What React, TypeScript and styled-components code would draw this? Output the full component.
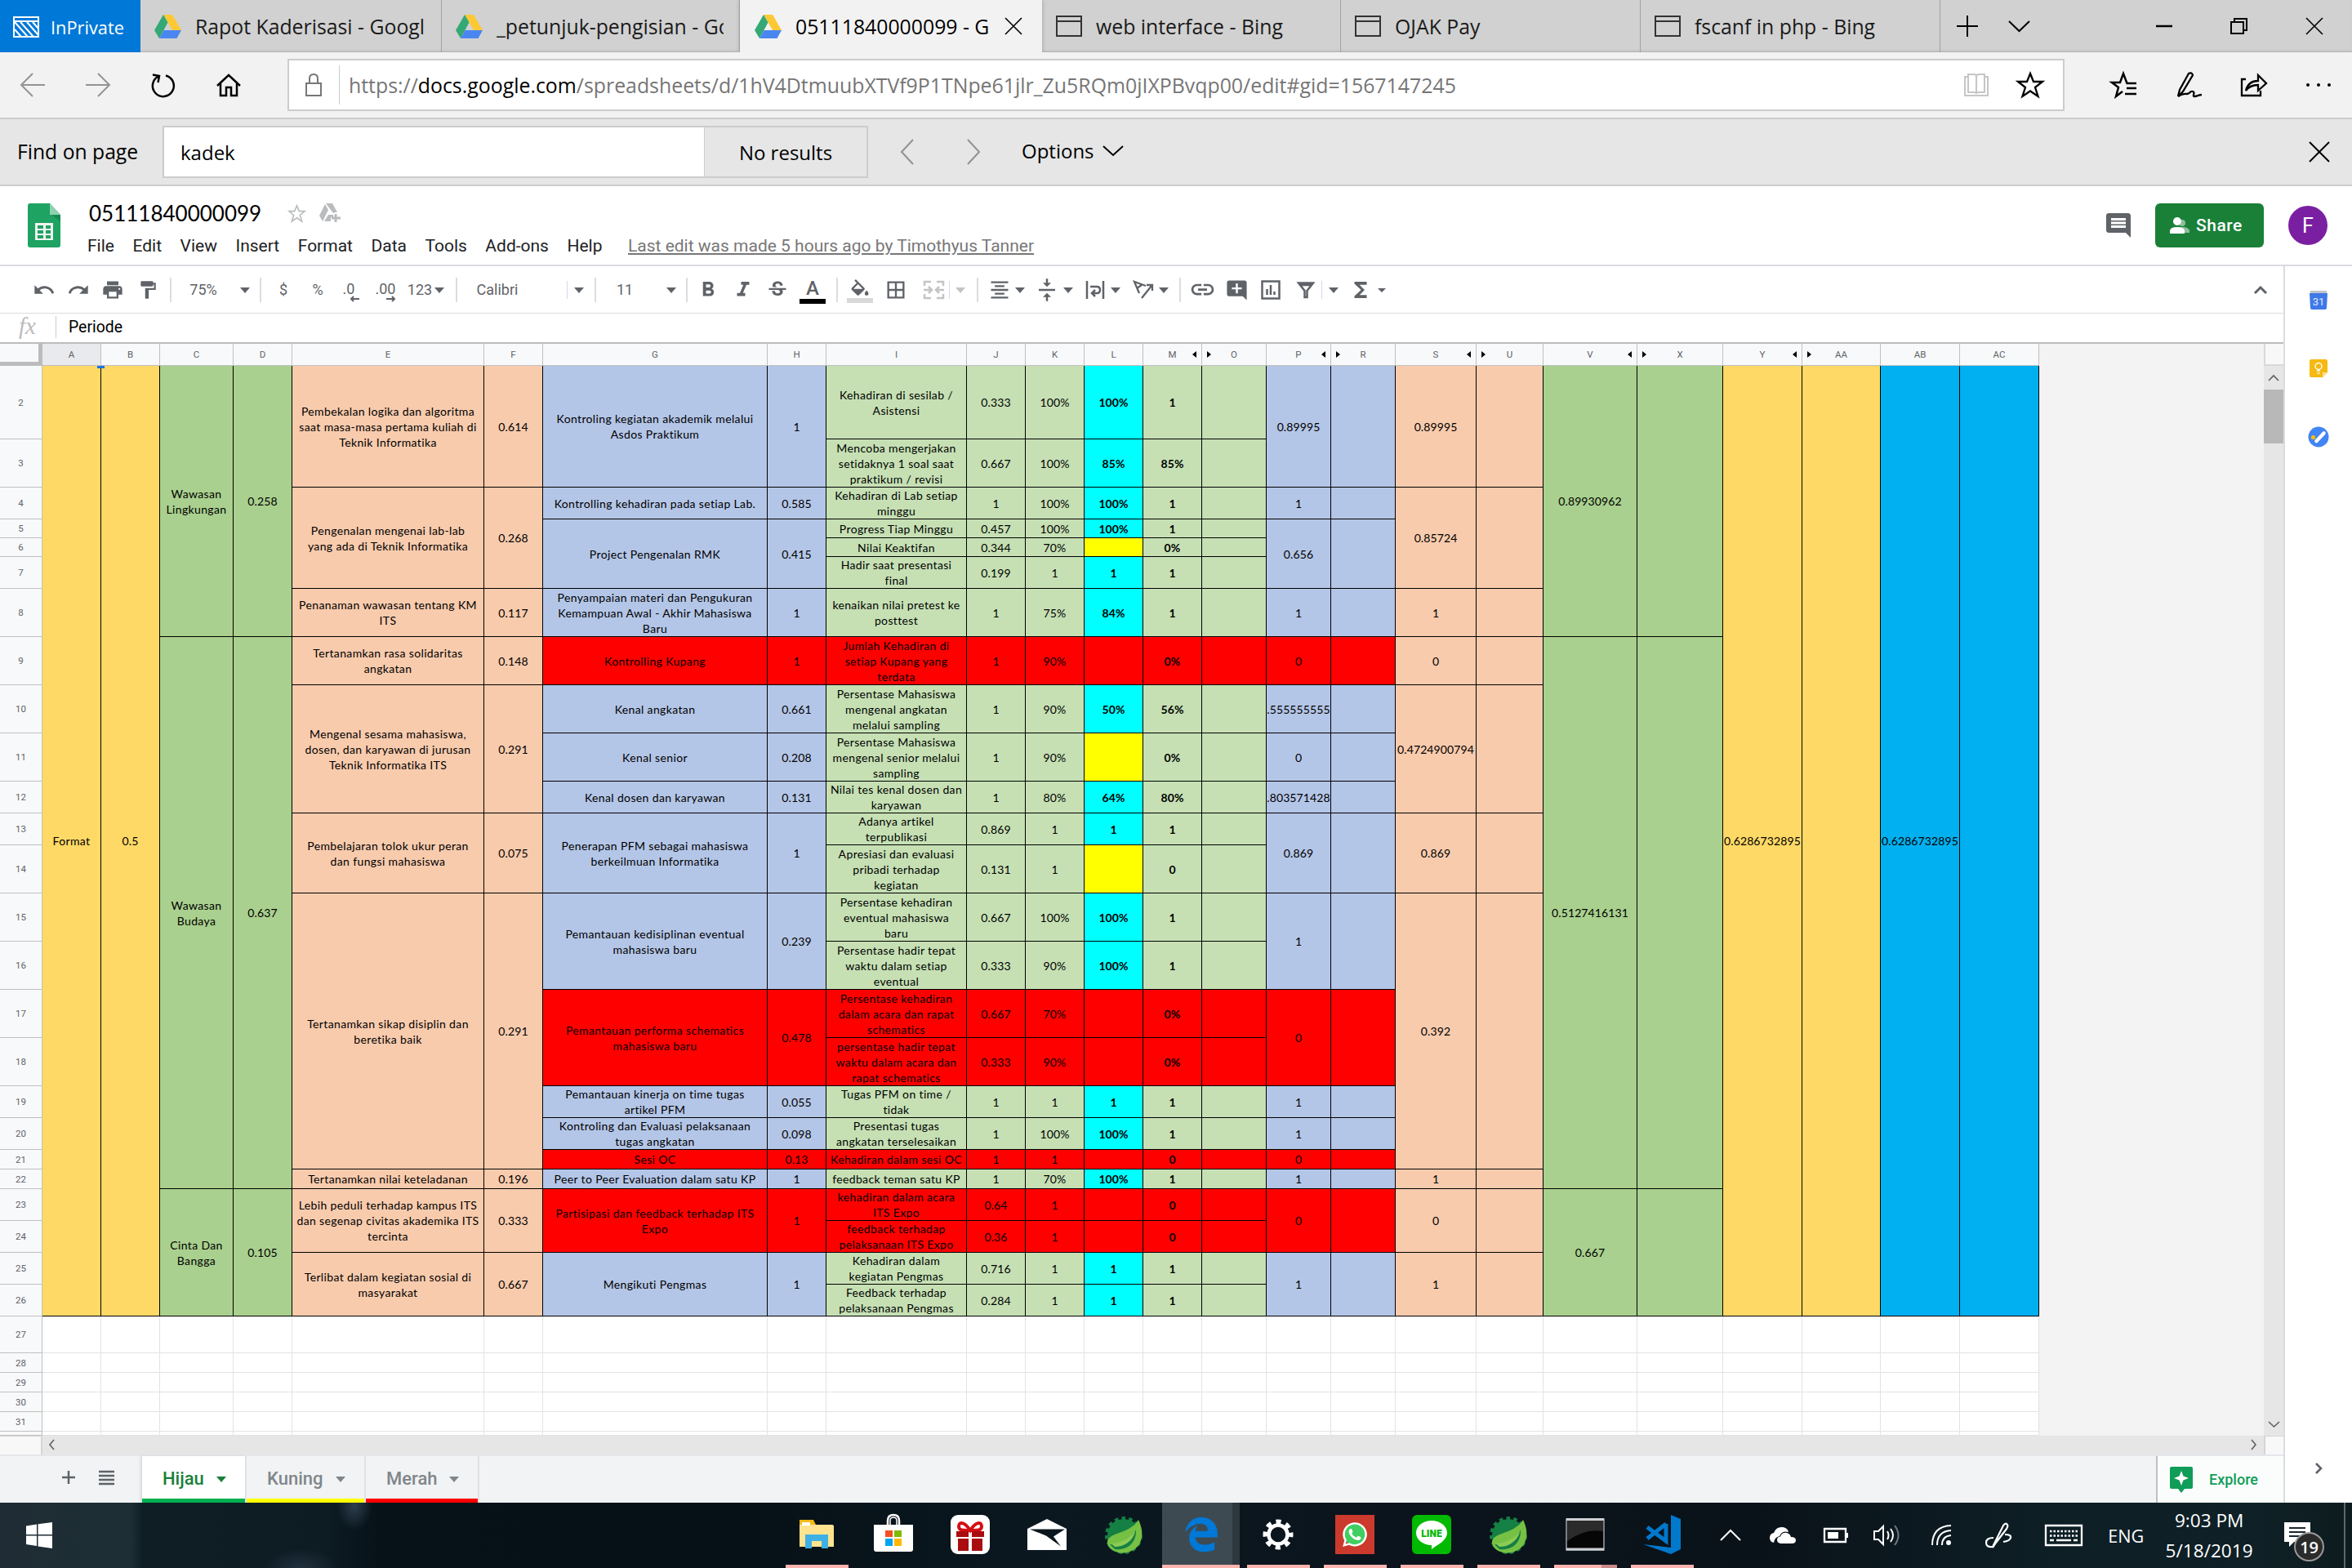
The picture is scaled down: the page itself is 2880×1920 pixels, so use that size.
import React from "react";
import styled, { createGlobalStyle, css } from "styled-components";
import {
  MdUndo, MdRedo, MdPrint, MdFormatPaint, MdFormatBold, MdFormatItalic, MdStrikethroughS,
  MdFormatColorFill, MdBorderAll, MdFormatAlignCenter, MdVerticalAlignCenter, MdInsertLink,
  MdAddComment, MdFunctions, MdComment,
} from "react-icons/md";
import { FaWhatsapp, FaEdgeLegacy } from "react-icons/fa6";

const UI = `"Open Sans", "Noto Sans", sans-serif`;
const DOCS = `Roboto, "Liberation Sans", sans-serif`;
const CELL = `Lato, "Open Sans", sans-serif`;

const Global = createGlobalStyle`
  * { box-sizing: border-box; }
  body { margin: 0; background: #fff; }
`;

const Screen = styled.div`
  width: 2880px;
  height: 1920px;
  display: flex;
  flex-direction: column;
  overflow: hidden;
  font-family: ${UI};
  color: #000;
  background: #fff;
`;

const Svg = styled.svg`
  display: block;
  flex: none;
  overflow: visible;
  fill: none;
  stroke: currentColor;
`;

/* ---------- browser tab strip ---------- */
const TabStrip = styled.div`
  height: 64px;
  flex: none;
  display: flex;
  background: #d1d1d1;
  box-shadow: inset 0 -3px 3px -2px #aaa;
`;
const PrivateBadge = styled.div`
  width: 172px;
  background: #0078d7;
  color: #fff;
  font-size: 21.8px;
  display: flex;
  align-items: center;
  gap: 14px;
  padding-left: 16px;
  padding-top: 2px;
`;
const Tab = styled.div<{ $active?: boolean; $w: number }>`
  width: ${(p) => p.$w}px;
  display: flex;
  align-items: center;
  padding: 0 ${(p) => (p.$active ? 25 : 19)}px 0 ${(p) => (p.$active ? 18 : 17)}px;
  gap: 17px;
  font-size: 24.8px;
  color: #1a1a1a;
  border-right: ${(p) => (p.$active ? "none" : "1px solid #a2a2a2")};
  ${(p) => p.$active && css`background: #f2f2f2; box-shadow: 0 0 5px #999; color: #000;`}
`;
const TabTitle = styled.span`
  flex: 1;
  overflow: hidden;
  white-space: nowrap;
  padding-bottom: 1px;
`;
const StripTools = styled.div`
  flex: 1;
  display: flex;
  align-items: center;
  padding-left: 20px;
  gap: 38px;
`;
const WindowButtons = styled.div`
  margin-left: auto;
  padding-right: 36px;
  display: flex;
  align-items: center;
  gap: 71px;
`;

/* ---------- address row ---------- */
const AddressRow = styled.div`
  height: 82px;
  flex: none;
  display: flex;
  align-items: center;
  background: #f2f2f2;
  border-bottom: 2px solid #ccc;
`;
const NavButtons = styled.div`
  width: 352px;
  padding-left: 25px;
  display: flex;
  gap: 50px;
  align-items: center;
`;
const AddressBox = styled.div`
  width: 2176px;
  height: 64px;
  border: 2px solid #ccc;
  background: #fff;
  display: flex;
  align-items: center;
  padding: 0 24px 0 20px;
`;
const AddressDivider = styled.div`
  width: 1px;
  height: 48px;
  background: #ccc;
  margin: 0 11px 0 21px;
`;
const Url = styled.div`
  flex: 1;
  font-size: 24.87px;
  color: #767676;
  white-space: nowrap;
  b { font-weight: 400; color: #000; }
`;
const AddressIcons = styled.div`
  display: flex;
  gap: 35px;
  align-items: center;
`;
const HubButtons = styled.div`
  flex: 1;
  display: flex;
  align-items: center;
  padding-left: 57px;
  gap: 47.5px;
`;
const Dots = styled(Svg)`
  fill: #000;
  stroke: none;
`;

/* ---------- find bar ---------- */
const FindBar = styled.div`
  height: 82px;
  flex: none;
  display: flex;
  align-items: center;
  background: #e6e6e6;
  border-bottom: 2px solid #ccc;
  font-size: 24px;
`;
const FindLabel = styled.div`
  width: 199px;
  padding: 0 0 2px 21px;
  font-size: 24.7px;
`;
const FindField = styled.div`
  width: 664px;
  height: 64px;
  border: 2px solid #ccc;
  border-right-width: 1px;
  background: #fff;
  display: flex;
  align-items: center;
  padding-left: 20px;
`;
const FindCount = styled.div`
  width: 200px;
  height: 64px;
  border: 2px solid #ccc;
  border-left: none;
  display: flex;
  align-items: center;
  justify-content: center;
`;
const FindSteps = styled.div`
  display: flex;
  gap: 65px;
  padding: 0 51px 0 40px;
  color: #919191;
`;
const FindOptions = styled.div`
  display: flex;
  align-items: center;
  gap: 11px;
  padding-bottom: 4px;
`;
const FindClose = styled.div`
  margin-left: auto;
  padding-right: 28px;
`;

/* ---------- document header ---------- */
const DocHeader = styled.div`
  height: 98px;
  flex: none;
  display: flex;
  border-bottom: 2px solid #dadce0;
  font-family: ${DOCS};
  padding-left: 34px;
`;
const DocLogo = styled.div`
  width: 73px;
  padding-top: 21px;
`;
const DocMeta = styled.div`
  flex: 1;
  display: flex;
  flex-direction: column;
`;
const TitleLine = styled.div`
  height: 54px;
  padding: 12px 0 0 2px;
  display: flex;
  align-items: center;
  gap: 16px;
  color: #b9bbbd;
`;
const DocTitle = styled.span`
  width: 227px;
  font-family: ${CELL};
  font-size: 26px;
  color: #000;
`;
const MenuLine = styled.div`
  height: 38px;
  display: flex;
  align-items: center;
  gap: 22.5px;
  font-size: 21px;
  color: #202124;
`;
const LastEdit = styled.span`
  margin-left: 9px;
  color: #777;
  text-decoration: underline;
`;
const DocActions = styled.div`
  display: flex;
  align-items: center;
  padding: 0 30px 0 0;
  color: #5f6368;
`;
const ShareButton = styled.div`
  width: 133px;
  height: 54px;
  margin: 0 30px 0 27px;
  border-radius: 6px;
  background: #1a8038;
  color: #fff;
  font-size: 21px;
  font-weight: 500;
  letter-spacing: 0.5px;
  display: flex;
  align-items: center;
  gap: 8px;
  padding-left: 18px;
`;
const Avatar = styled.div`
  width: 48px;
  height: 48px;
  border-radius: 50%;
  background: #7b1fa2;
  color: #fff;
  font-size: 25px;
  display: flex;
  align-items: center;
  justify-content: center;
`;

/* ---------- workspace ---------- */
const Workspace = styled.div`
  height: 1514px;
  flex: none;
  display: flex;
`;
const Editor = styled.div`
  width: 2796px;
  display: flex;
  flex-direction: column;
  font-family: ${DOCS};
`;
const SidePanel = styled.div`
  width: 84px;
  border-left: 2px solid #dadce0;
  display: flex;
  flex-direction: column;
  align-items: center;
  padding: 30px 0 35px 0;
`;
const SideIcon = styled.div<{ $gap: number; $last?: boolean }>`
  margin-top: ${(p) => (p.$last ? "auto" : p.$gap + "px")};
  color: #5f6368;
`;

const Toolbar = styled.div`
  height: 58px;
  flex: none;
  display: flex;
  align-items: center;
  border-bottom: 1px solid #dadce0;
  color: #5f6368;
  font-size: 18px;
`;
const Tool = styled.div<{ $gap: number; $w: number; $dim?: boolean; $drop?: number }>`
  width: ${(p) => p.$w}px;
  margin-left: ${(p) => p.$gap}px;
  margin-top: ${(p) => p.$drop || 0}px;
  display: flex;
  flex: none;
  justify-content: center;
  align-items: center;
  white-space: nowrap;
  color: ${(p) => (p.$dim ? "#c4c4c4" : "inherit")};
  & > svg { flex: none; }
`;
const Sep = styled.div<{ $gap: number; $faint?: boolean }>`
  width: ${(p) => (p.$faint ? 1 : 2)}px;
  height: ${(p) => (p.$faint ? 22 : 30)}px;
  flex: none;
  margin-left: ${(p) => p.$gap}px;
  background: ${(p) => (p.$faint ? "#dfd3ee" : "#dadce0")};
`;
const Caret = styled.i<{ $gap: number; $dim?: boolean; $small?: boolean }>`
  flex: none;
  margin-left: ${(p) => p.$gap}px;
  margin-top: 2px;
  border: ${(p) => (p.$small ? 5 : 6)}px solid transparent;
  border-top: ${(p) => (p.$small ? 5 : 7)}px solid ${(p) => (p.$dim ? "#c4c4c4" : "currentColor")};
  border-bottom: 0;
`;
const Stack = styled.div`
  display: flex;
  flex-direction: column;
  align-items: center;
  flex: none;
`;
const TextColorLetter = styled.span`
  font-size: 24px;
  line-height: 26px;
  font-weight: 500;
`;
const DecimalArrow = styled(Svg)`
  margin: -2px 0 0 14px;
`;
const Swatch = styled.div<{ $c: string; $up: number }>`
  width: 32px;
  height: 6px;
  margin-top: -${(p) => p.$up}px;
  background: ${(p) => p.$c};
`;

const FormulaBar = styled.div`
  height: 37px;
  flex: none;
  display: flex;
  align-items: center;
  border-bottom: 2px solid #bdbdbd;
  font-size: 19.4px;
  padding-bottom: 2px;
`;
const Fx = styled.div`
  width: 69px;
  height: 27px;
  padding-left: 23px;
  font: italic 29px/25px "Liberation Serif", serif;
  color: #bbb;
  border-right: 1px solid #ccc;
  margin-right: 15px;
`;

/* ---------- grid ---------- */
const COLS: [string, number, number?][] = [
  ["A", 72], ["B", 72], ["C", 90], ["D", 72], ["E", 235], ["F", 72], ["G", 275], ["H", 72],
  ["I", 172], ["J", 72], ["K", 72], ["L", 72], ["M", 72, 1], ["O", 79, 2], ["P", 79, 1], ["R", 79, 2],
  ["S", 99, 1], ["U", 82, 2], ["V", 115, 1], ["X", 105, 2], ["Y", 97, 1], ["AA", 96, 2], ["AB", 97], ["AC", 97],
];
const ROWS = [90, 59, 39, 23, 23, 39, 59, 59, 59, 59, 39, 39, 59, 59, 59, 59, 59, 39, 39, 24, 24, 39, 39, 39, 39, 45, 24, 24, 24, 24, 5];
const colTrack = COLS.map((c) => c[1] + "px").join(" ");
const rowTrack = ROWS.map((r) => r + "px").join(" ");

const SheetArea = styled.div`
  height: 1337px;
  flex: none;
  display: flex;
`;
const SheetView = styled.div`
  width: 2772px;
  display: flex;
  flex-direction: column;
  background: #f3f3f3;
`;
const HeaderRow = styled.div`
  display: grid;
  grid-template-columns: 52px ${colTrack};
  height: 27px;
  flex: none;
`;
const Corner = styled.div`
  background: #f8f9fa;
  border-right: 5px solid #bcbcbc;
  border-bottom: 5px solid #bcbcbc;
`;
const ColHead = styled.div<{ $on?: boolean; $arrow?: number }>`
  position: relative;
  background: ${(p) => (p.$on ? "#e8eaed" : "#f8f9fa")};
  border-right: 1px solid #c0c0c0;
  border-bottom: 1px solid #c0c0c0;
  font-size: 11.5px;
  color: #5f6368;
  display: flex;
  align-items: center;
  justify-content: center;
  ${(p) => p.$arrow && css`
    &::after {
      content: "";
      position: absolute;
      top: 9px;
      ${p.$arrow === 1 ? "right: 6px; border-right: 5px solid #000;" : "left: 6px; border-left: 5px solid #000;"}
      border-top: 4px solid transparent;
      border-bottom: 4px solid transparent;
    }
  `}
`;
const Body = styled.div`
  display: grid;
  grid-template-columns: 52px ${colTrack};
  grid-template-rows: ${rowTrack};
  position: relative;
`;
const RowHead = styled.div<{ $r: number }>`
  grid-column: 1;
  grid-row: ${(p) => p.$r};
  background: #f8f9fa;
  border-right: 1px solid #c0c0c0;
  border-bottom: 1px solid #c0c0c0;
  font-size: 11.5px;
  color: #5f6368;
  display: flex;
  align-items: center;
  justify-content: center;
  overflow: hidden;
`;
const Cell = styled.div<{ $c: number; $r: number; $n: number; $bg: string; $bold?: boolean; $words: boolean }>`
  grid-column: ${(p) => p.$c + 2};
  grid-row: ${(p) => p.$r - 1} / span ${(p) => p.$n};
  background: ${(p) => p.$bg};
  border-right: 1px solid #000;
  border-bottom: 1px solid #000;
  font: ${(p) => (p.$bold ? 700 : 400)} 14px/19px ${CELL};
  letter-spacing: ${(p) => (p.$words ? 0.36 : 0.1)}px;
  color: #000;
  display: flex;
  align-items: center;
  justify-content: center;
  text-align: center;
  white-space: pre;
  overflow: hidden;
`;
const BlankCell = styled.div<{ $c: number; $r: number }>`
  grid-column: ${(p) => p.$c};
  grid-row: ${(p) => p.$r};
  background: #fff;
  border-right: 1px solid #e2e3e3;
  border-bottom: 1px solid #e2e3e3;
`;
const SelectHandle = styled.div`
  position: absolute;
  left: 119px;
  top: 0;
  width: 9px;
  height: 3px;
  background: #1a73e8;
`;

const Y = "#ffd966", G1 = "#a9d08e", PK = "#f8cbad", BL = "#b4c6e7", G2 = "#c6e0b4", RED = "#ff0000", CY = "#00ffff", YE = "#ffff00", SKY = "#00b0f0";

type C = { c: number; r: number; n: number; t: string; bg: string; b?: boolean };
const cells: C[] = [];
const add = (c: number, r: number, n: number, t: string, bg: string, b?: boolean) => cells.push({ c, r, n, t, bg, b });

add(0, 2, 25, "Format", Y);
add(1, 2, 25, "0.5", Y);
([
  [2, 7, "Wawasan\nLingkungan", "0.258", "0.89930962"],
  [9, 14, "Wawasan\nBudaya", "0.637", "0.5127416131"],
  [23, 4, "Cinta Dan\nBangga", "0.105", "0.667"],
] as [number, number, string, string, string][]).forEach(([r, n, t, w, v]) => {
  add(2, r, n, t, G1);
  add(3, r, n, w, G1);
  add(18, r, n, v, G1);
  add(19, r, n, "", G1);
});
([
  [2, 2, "Pembekalan logika dan algoritma\nsaat masa-masa pertama kuliah di\nTeknik Informatika", "0.614", "0.89995"],
  [4, 4, "Pengenalan mengenai lab-lab\nyang ada di Teknik Informatika", "0.268", "0.85724"],
  [8, 1, "Penanaman wawasan tentang KM\nITS", "0.117", "1"],
  [9, 1, "Tertanamkan rasa solidaritas\nangkatan", "0.148", "0"],
  [10, 3, "Mengenal sesama mahasiswa,\ndosen, dan karyawan di jurusan\nTeknik Informatika ITS", "0.291", "0.4724900794"],
  [13, 2, "Pembelajaran tolok ukur peran\ndan fungsi mahasiswa", "0.075", "0.869"],
  [15, 7, "Tertanamkan sikap disiplin dan\nberetika baik", "0.291", "0.392"],
  [22, 1, "Tertanamkan nilai keteladanan", "0.196", "1"],
  [23, 2, "Lebih peduli terhadap kampus ITS\ndan segenap civitas akademika ITS\ntercinta", "0.333", "0"],
  [25, 2, "Terlibat dalam kegiatan sosial di\nmasyarakat", "0.667", "1"],
] as [number, number, string, string, string][]).forEach(([r, n, t, w, v]) => {
  add(4, r, n, t, PK);
  add(5, r, n, w, PK);
  add(16, r, n, v, PK);
  add(17, r, n, "", PK);
});
([
  [2, 2, "Kontroling kegiatan akademik melalui\nAsdos Praktikum", "1", "0.89995"],
  [4, 1, "Kontrolling kehadiran pada setiap Lab.", "0.585", "1"],
  [5, 3, "Project Pengenalan RMK", "0.415", "0.656"],
  [8, 1, "Penyampaian materi dan Pengukuran\nKemampuan Awal - Akhir Mahasiswa\nBaru", "1", "1"],
  [9, 1, "Kontrolling Kupang", "1", "0", 1],
  [10, 1, "Kenal angkatan", "0.661", ".555555555"],
  [11, 1, "Kenal senior", "0.208", "0"],
  [12, 1, "Kenal dosen dan karyawan", "0.131", ".803571428"],
  [13, 2, "Penerapan PFM sebagai mahasiswa\nberkeilmuan Informatika", "1", "0.869"],
  [15, 2, "Pemantauan kedisiplinan eventual\nmahasiswa baru", "0.239", "1"],
  [17, 2, "Pemantauan performa schematics\nmahasiswa baru", "0.478", "0", 1],
  [19, 1, "Pemantauan kinerja on time tugas\nartikel PFM", "0.055", "1"],
  [20, 1, "Kontroling dan Evaluasi pelaksanaan\ntugas angkatan", "0.098", "1"],
  [21, 1, "Sesi OC", "0.13", "0", 1],
  [22, 1, "Peer to Peer Evaluation dalam satu KP", "1", "1"],
  [23, 2, "Partisipasi dan feedback terhadap ITS\nExpo", "1", "0", 1],
  [25, 2, "Mengikuti Pengmas", "1", "1"],
] as [number, number, string, string, string, number?][]).forEach(([r, n, t, w, v, red]) => {
  const bg = red ? RED : BL;
  add(6, r, n, t, bg);
  add(7, r, n, w, bg);
  add(14, r, n, v, bg);
  add(15, r, n, "", bg);
});
([
  ["Kehadiran di sesilab /\nAsistensi", "0.333", "100%", "100%", "1"],
  ["Mencoba mengerjakan\nsetidaknya 1 soal saat\npraktikum / revisi", "0.667", "100%", "85%", "85%"],
  ["Kehadiran di Lab setiap\nminggu", "1", "100%", "100%", "1"],
  ["Progress Tiap Minggu", "0.457", "100%", "100%", "1"],
  ["Nilai Keaktifan", "0.344", "70%", "", "0%"],
  ["Hadir saat presentasi\nfinal", "0.199", "1", "1", "1"],
  ["kenaikan nilai pretest ke\nposttest", "1", "75%", "84%", "1"],
  ["Jumlah Kehadiran di\nsetiap Kupang yang\nterdata", "1", "90%", "", "0%", 1],
  ["Persentase Mahasiswa\nmengenal angkatan\nmelalui sampling", "1", "90%", "50%", "56%"],
  ["Persentase Mahasiswa\nmengenal senior melalui\nsampling", "1", "90%", "", "0%"],
  ["Nilai tes kenal dosen dan\nkaryawan", "1", "80%", "64%", "80%"],
  ["Adanya artikel\nterpublikasi", "0.869", "1", "1", "1"],
  ["Apresiasi dan evaluasi\npribadi terhadap\nkegiatan", "0.131", "1", "", "0"],
  ["Persentase kehadiran\neventual mahasiswa\nbaru", "0.667", "100%", "100%", "1"],
  ["Persentase hadir tepat\nwaktu dalam setiap\neventual", "0.333", "90%", "100%", "1"],
  ["Persentase kehadiran\ndalam acara dan rapat\nschematics", "0.667", "70%", "", "0%", 1],
  ["persentase hadir tepat\nwaktu dalam acara dan\nrapat schematics", "0.333", "90%", "", "0%", 1],
  ["Tugas PFM on time /\ntidak", "1", "1", "1", "1"],
  ["Presentasi tugas\nangkatan terselesaikan", "1", "100%", "100%", "1"],
  ["Kehadiran dalam sesi OC", "1", "1", "", "0", 1],
  ["feedback teman satu KP", "1", "70%", "100%", "1"],
  ["kehadiran dalam acara\nITS Expo", "0.64", "1", "", "0", 1],
  ["feedback terhadap\npelaksanaan ITS Expo", "0.36", "1", "", "0", 1],
  ["Kehadiran dalam\nkegiatan Pengmas", "0.716", "1", "1", "1"],
  ["Feedback terhadap\npelaksanaan Pengmas", "0.284", "1", "1", "1"],
] as [string, string, string, string, string, number?][]).forEach(([t, w, k, l, m, red], i) => {
  const r = i + 2;
  const bg = red ? RED : G2;
  add(8, r, 1, t, bg);
  add(9, r, 1, w, bg);
  add(10, r, 1, k, bg);
  add(11, r, 1, l, red ? RED : l ? CY : YE, true);
  add(12, r, 1, m, bg, true);
  add(13, r, 1, "", bg);
});
add(20, 2, 25, "0.6286732895", Y);
add(21, 2, 25, "", Y);
add(22, 2, 25, "0.6286732895", SKY);
add(23, 2, 25, "", SKY);

const VScroll = styled.div`
  width: 24px;
  display: flex;
  flex-direction: column;
  align-items: center;
  background: #e6e6e6;
  color: #606060;
`;
const ScrollCap = styled.div`
  width: 24px;
  height: 27px;
  border-left: 2px solid #d9d9d9;
  border-bottom: 2px solid #d9d9d9;
  background: #f8f8f8;
`;
const ScrollArrow = styled.div<{ $last?: boolean }>`
  height: 29px;
  margin-top: ${(p) => (p.$last ? "auto" : 0)};
  display: flex;
  align-items: center;
`;
const Thumb = styled.div`
  width: 24px;
  height: 66px;
  background: #b8b8b8;
`;
const HScroll = styled.div`
  height: 23px;
  flex: none;
  display: flex;
  background: #e6e6e6;
  color: #606060;
`;
const HCap = styled.div<{ $w: number; $end?: boolean }>`
  width: ${(p) => p.$w}px;
  background: #f8f8f8;
  border: 0 solid #d5d5d5;
  border-top-width: 1px;
  ${(p) => (p.$end ? "border-left-width: 2px;" : "border-right-width: 2px;")}
`;
const HTrack = styled.div`
  flex: 1;
  display: flex;
  align-items: center;
  justify-content: space-between;
  padding: 0 9px 2px 8px;
`;

const SheetTabs = styled.div`
  height: 59px;
  flex: none;
  display: flex;
  background: #f1f3f4;
  border-top: 2px solid #e4e6ea;
  color: #5f6368;
`;
const TabTools = styled.div`
  width: 174px;
  display: flex;
  align-items: center;
  padding: 0 0 6px 76px;
  gap: 29px;
`;
const SheetTab = styled.div<{ $w: number; $line: string; $on?: boolean }>`
  width: ${(p) => p.$w}px;
  height: 57px;
  display: flex;
  align-items: center;
  justify-content: space-between;
  padding: 0 23px 3px 25px;
  font-size: 22px;
  font-weight: 500;
  border-right: 2px solid #e0e2e6;
  color: ${(p) => (p.$on ? "#188038" : "#80868b")};
  background:
    linear-gradient(${(p) => p.$line}, ${(p) => p.$line}) bottom left / 100% 5px no-repeat,
    ${(p) => (p.$on ? "#fff" : "#f1f3f4")};
  ${(p) => p.$on && css`box-shadow: -2px 0 3px #d5d7da;`}
`;
const Explore = styled.div`
  margin-left: auto;
  width: 156px;
  border-left: 2px solid #bdc1c6;
  background: #fbfdfd;
  color: #0f9d58;
  font-size: 18px;
  font-weight: 500;
  display: flex;
  align-items: center;
  gap: 20px;
  padding: 0 0 0 15px;
`;

/* ---------- taskbar ---------- */
const Taskbar = styled.div`
  height: 80px;
  flex: none;
  display: flex;
  color: #fff;
  background:
    radial-gradient(ellipse 22px 30px at 434px 4px, #2c3d4d, transparent),
    radial-gradient(ellipse 45px 24px at 368px 80px, #22313f, transparent),
    linear-gradient(90deg, #202c35 0, #1d2f35 160px, #0f1e24 175px, #0d1b23 400px, #061118 470px, #061117 900px, #0b1820 1300px, #0b131c 1800px, #0a1219 2150px, #0e1e25 2500px, #0f2127 2760px, #0d1b1e 2880px);
`;
const StartButton = styled.div`
  width: 953px;
  display: flex;
  align-items: center;
  padding-left: 32px;
`;
const TaskSlot = styled.div<{ $on?: boolean; $run?: boolean; $more?: boolean }>`
  width: 94.1px;
  position: relative;
  display: flex;
  align-items: center;
  justify-content: center;
  padding-bottom: 2px;
  background: ${(p) => (p.$on ? "linear-gradient(90deg, #3d4a52 0 86px, #2d373e 86px)" : "none")};
  ${(p) => p.$run && css`
    &::after {
      content: "";
      position: absolute;
      bottom: 0;
      left: ${p.$on ? 0 : 9}px;
      right: ${p.$on ? 0 : 8}px;
      height: 4px;
      background: ${p.$more ? "linear-gradient(90deg, #ffb3ae 58px, #c98a88 58px)" : "#ffb3ae"};
    }
  `}
`;
const AppTile = styled.div<{ $bg: string; $r?: number }>`
  width: 48px;
  height: 48px;
  border-radius: ${(p) => p.$r || 0}px;
  background: ${(p) => p.$bg};
  display: flex;
  align-items: center;
  justify-content: center;
`;
const ChatBubble = styled.div`
  display: flex;
  color: #fff;
  background: radial-gradient(circle, #3fcf62 0 13px, transparent 14px);
`;
const Tray = styled.div`
  flex: 1;
  display: flex;
  align-items: center;
  padding-left: 23px;
`;
const TrayItem = styled.div<{ $w: number; $gap: number }>`
  width: ${(p) => p.$w}px;
  margin-left: ${(p) => p.$gap}px;
  display: flex;
  justify-content: center;
  white-space: nowrap;
  font-size: 21.6px;
`;
const Clock = styled.div`
  width: 120px;
  margin-left: 20px;
  text-align: center;
  font-size: 22.6px;
  line-height: 37px;
`;
const Notice = styled.div`
  position: relative;
  margin-left: 32px;
  width: 73px;
  height: 48px;
  padding-top: 8px;
`;
const NoticeCount = styled.div`
  position: absolute;
  left: 12px;
  top: 20px;
  width: 37px;
  height: 36px;
  border-radius: 50%;
  border: 2px solid #999;
  background: #2b2b2b;
  font-size: 20px;
  font-weight: 600;
  display: flex;
  align-items: center;
  justify-content: center;
`;
const ShowDesktop = styled.div`
  width: 9px;
  height: 80px;
  border-left: 2px solid #5b666b;
`;

/* ---------- drawings ---------- */
const DriveIcon = () => (
  <Svg width="33" height="29" viewBox="0 0 33 29">
    <path d="M11 0h11l11 19H22z" fill="#fcc934" stroke="none" />
    <path d="M11 0l5.500 9.500L6 29 0 19z" fill="#34a875" stroke="none" />
    <path d="M11.500 19H33l-5.500 10H6z" fill="#4a86f0" stroke="none" />
  </Svg>
);
const PageIcon = () => (
  <Svg width="32" height="26" strokeWidth="2" color="#333"><path d="M1 1h30v24H1zM1 7h30" /></Svg>
);
const Cross = ({ s, w = 1.6 }: { s: number; w?: number }) => (
  <Svg width={s} height={s} viewBox="0 0 20 20" strokeWidth={w}><path d="M0 0L20 20M20 0L0 20" /></Svg>
);
const Chev = ({ d, w, h, sw = 2 }: { d: string; w: number; h: number; sw?: number }) => (
  <Svg width={w} height={h} strokeWidth={sw}><path d={d} /></Svg>
);
const SpringIcon = () => (
  <Svg width="48" height="48" viewBox="0 0 48 48">
    <circle cx="24" cy="25" r="20" fill="#158043" stroke="none" />
    <circle cx="24" cy="25" r="20.500" fill="none" stroke="#158043" strokeWidth="5" strokeDasharray="4.500 4" />
    <path d="M42 6c6 12 7 28-5 36-11 8-26 5-32-4C-2 20 30 26 42 6z" fill="#76c044" stroke="none" />
    <path d="M7 36c14 2 28-5 32-18 1 17-12 26-26 24z" fill="#158043" stroke="none" />
    <path d="M9 35c10 0 22-6 29-14-4 12-14 18-25 18z" fill="#8ccc55" stroke="none" />
  </Svg>
);
const app: React.ReactNode[] = [
  <Svg width="44" height="38" viewBox="0 0 44 38">
    <path d="M1 2h16l3 5h21a2 2 0 0 1 2 2v25H1z" fill="#ffe38f" stroke="none" />
    <path d="M1 1h17l3 6H1z" fill="#f5b915" stroke="none" /><path d="M4 4h10v4H4z" fill="#fff" stroke="none" />
    <path d="M8 36V19h28v17h-8v-9H16v9z" fill="#3fb0e5" stroke="none" />
  </Svg>,
  <Svg width="48" height="50" viewBox="0 0 48 50">
    <path d="M17 14V8q0-7 7-7t7 7v6" strokeWidth="2.500" /><path d="M20 14V8q0-4 4-4t4 4v6" strokeWidth="1.500" />
    <path d="M0 13h48v30q0 3-3 3H3q-3 0-3-3z" fill="#fff" stroke="none" />
    <path d="M14 20h9v8h-9z" fill="#f25022" stroke="none" /><path d="M25 20h9v8h-9z" fill="#7fba00" stroke="none" />
    <path d="M14 30h9v9h-9z" fill="#00a4ef" stroke="none" /><path d="M25 30h9v9h-9z" fill="#ffb900" stroke="none" />
  </Svg>,
  <AppTile $bg="#fff" $r={9}>
    <Svg width="38" height="40" viewBox="0 0 38 40">
      <path d="M19 15C12 4 5 4 5 10s7 5 14 5c7 0 14 1 14-5S26 4 19 15z" stroke="#d40f14" strokeWidth="4" />
      <path d="M2 16h15v7H2zM21 16h15v7H21zM4 25h13v15H4zM21 25h13v15H21z" fill="#a90d10" stroke="none" />
    </Svg>
  </AppTile>,
  <Svg width="48" height="38" viewBox="0 0 48 38">
    <path d="M0 12L24 0l24 12v26H0z" fill="#fff" stroke="none" />
    <path d="M3 12.500h43l-14 9 9 12-18-13z" fill="#0a161d" stroke="none" />
  </Svg>,
  <SpringIcon />,
  <FaEdgeLegacy size={44} color="#0078d7" />,
  <Svg width="38" height="38" viewBox="0 0 38 38">
    <circle cx="19" cy="19" r="11.500" stroke="#fff" strokeWidth="4.500" />
    <circle cx="19" cy="19" r="15.500" stroke="#fff" strokeWidth="6" strokeDasharray="6.087 6.087" strokeDashoffset="3" />
  </Svg>,
  <AppTile $bg="#cb3a2d"><ChatBubble><FaWhatsapp size={34} /></ChatBubble></AppTile>,
  <AppTile $bg="#00b900" $r={6}>
    <Svg width="44" height="44" viewBox="0 0 44 44">
      <path d="M22 5c11 0 19 7 19 15 0 9-11 14-19 20v-5C11 35 3 28 3 20S11 5 22 5z" fill="#fff" stroke="none" />
      <text x="22" y="25" textAnchor="middle" fontFamily="Roboto" fontWeight="900" fontSize="12" fill="#00b900" stroke="none">LINE</text>
    </Svg>
  </AppTile>,
  <SpringIcon />,
  <Svg width="48" height="40" viewBox="0 0 48 40">
    <rect x="1" y="1" width="46" height="38" fill="#060606" stroke="#9fa3a8" strokeWidth="1.500" />
    <path d="M2 28Q24 12 46 16V3H2z" fill="#2b2b2b" stroke="none" />
    <path d="M1 1.500h46M1 38h46" stroke="#cdd0d4" strokeWidth="3" />
  </Svg>,
  <Svg width="48" height="48" viewBox="0 0 48 48">
    <path d="M35 0l12 5v37l-12 6L1 36l34 4z" fill="#0078cc" stroke="none" />
    <path d="M29 11v21L6 15M29 11L6 29" fill="none" stroke="#0078cc" strokeWidth="5" />
  </Svg>,
];

export default function App() {
  return (
    <Screen>
      <Global />
      <TabStrip>
        <PrivateBadge>
          <Svg width="32" height="26" strokeWidth="2"><path d="M1 1h30v24H1zM1 6h30M2 7l16 18M9 7l16 18M17 7l14 16M24 7l7 8M2 16l8 9" /></Svg>
          <span>InPrivate</span>
        </PrivateBadge>
        <Tab $w={369}><DriveIcon /><TabTitle>Rapot Kaderisasi - Googl</TabTitle></Tab>
        <Tab $w={365}><DriveIcon /><TabTitle>_petunjuk-pengisian - Go</TabTitle></Tab>
        <Tab $w={370} $active><DriveIcon /><TabTitle>05111840000099 - G</TabTitle><Cross s={20} /></Tab>
        <Tab $w={366}><PageIcon /><TabTitle>web interface - Bing</TabTitle></Tab>
        <Tab $w={367}><PageIcon /><TabTitle>OJAK Pay</TabTitle></Tab>
        <Tab $w={367}><PageIcon /><TabTitle>fscanf in php - Bing</TabTitle></Tab>
        <StripTools>
          <Svg width="26" height="26" strokeWidth="2"><path d="M13 0v26M0 13h26" /></Svg>
          <Chev w={25} h={14} d="M0 1l12.500 12L25 1" />
          <WindowButtons>
            <Svg width="20" height="4" strokeWidth="2.500"><path d="M0 2h20" /></Svg>
            <Svg width="22" height="20" strokeWidth="2"><path d="M1 5h15v14H1zM5 5V1h15v14h-4" /></Svg>
            <Cross s={20} />
          </WindowButtons>
        </StripTools>
      </TabStrip>

      <AddressRow>
        <NavButtons>
          <Svg width="30" height="28" strokeWidth="2" color="#949494"><path d="M15 0L1 14l14 14M1 14h29" /></Svg>
          <Svg width="30" height="28" strokeWidth="2" color="#949494"><path d="M15 0l14 14-14 14M29 14H0" /></Svg>
          <Svg width="30" height="30" strokeWidth="2.500"><path d="M9 4.500A13 13 0 1 0 18 3.500M2 2.500l8 1.500-1.500 8" /></Svg>
          <Svg width="30" height="28" strokeWidth="2.500"><path d="M1 15L15 2l14 13M5 12v15h7V17h6v10h7V12" /></Svg>
        </NavButtons>
        <AddressBox>
          <Svg width="20" height="28" strokeWidth="2" color="#777"><path d="M1 12h18v15H1zM5 12V6q0-5 5-5t5 5v6" /></Svg>
          <AddressDivider />
          <Url>https://<b>docs.google.com</b>/spreadsheets/d/1hV4DtmuubXTVf9P1TNpe61jlr_Zu5RQm0jIXPBvqp00/edit#gid=1567147245</Url>
          <AddressIcons>
            <Svg width="30" height="28" strokeWidth="2" color="#c6c6c6"><path d="M5 1h7q3 0 3 3 0-3 3-3h7v22h-7q-3 0-3 2 0-2-3-2H5zM15 4v20M5 4H1v23h28V4h-4" /></Svg>
            <Svg width="32" height="32" viewBox="0 0 32 32" strokeWidth="2.300"><path d="M16 2l4 10h11l-9 7 3.500 11L16 23.500 6.500 30 10 19 1 12h11z" /></Svg>
          </AddressIcons>
        </AddressBox>
        <HubButtons>
          <Svg width="32" height="32" strokeWidth="2.500"><path d="M31 14H19.500L15 2l-4 11H1l8 6-3 11 8-6M19 20h12M17 27h14" /></Svg>
          <Svg width="32" height="32" strokeWidth="2.300"><path d="M2 30l2-8L15 2q4-2 5 2L8 24l-6 6q6-4 11-3c4 0 3-4 7-3s-2 7 3 6 5-2 8-2" /></Svg>
          <Svg width="32" height="30" strokeWidth="2.300"><path d="M6 8H1v20h23v-6M6 22q3-12 15-12V3l10 10-10 9v-7q-10 0-15 7z" /></Svg>
          <Dots width="30" height="4"><circle cx="2" cy="2" r="2" /><circle cx="15" cy="2" r="2" /><circle cx="28" cy="2" r="2" /></Dots>
        </HubButtons>
      </AddressRow>

      <FindBar>
        <FindLabel>Find on page</FindLabel>
        <FindField>kadek</FindField>
        <FindCount>No results</FindCount>
        <FindSteps>
          <Chev w={16} h={32} d="M15 1L1 16l14 15" />
          <Chev w={16} h={32} d="M1 1l14 15L1 31" />
        </FindSteps>
        <FindOptions>Options <Chev w={24} h={13} d="M0 1l12 11L24 1" /></FindOptions>
        <FindClose><Cross s={24} /></FindClose>
      </FindBar>

      <DocHeader>
        <DocLogo>
          <Svg width="40" height="54" viewBox="0 0 40 54">
            <path d="M3 0h24l13 14v37q0 3-3 3H3q-3 0-3-3V3q0-3 3-3z" fill="#1ea362" stroke="none" />
            <path d="M27 0l13 14H27z" fill="#8ed1b1" stroke="none" /><path d="M29 14h11v8z" fill="#158a50" stroke="none" />
            <path d="M9 24h22v21H9z" fill="#f1f3f3" stroke="none" />
            <path d="M12 27h7v4h-7zM22 27h6v4h-6zM12 33h7v4h-7zM22 33h6v4h-6zM12 39h7v4h-7zM22 39h6v4h-6z" fill="#1ea362" stroke="none" />
          </Svg>
        </DocLogo>
        <DocMeta>
          <TitleLine>
            <DocTitle>05111840000099</DocTitle>
            <Svg width="23" height="23" viewBox="0 0 24 24" strokeWidth="1.700"><path d="M12 2l3 7h7l-6 5 2.500 8L12 17.500 5.500 22 8 14 2 9h7z" /></Svg>
            <Svg width="27" height="24" viewBox="0 0 27 24">
              <path d="M8 0h8l6 11h-3l-2 1zM7 1l4 7-7 14-4-7zM11 14h6v3h-3v5h-8z" fill="currentColor" stroke="none" />
              <path d="M20 13v10M15 18h11" strokeWidth="3" />
            </Svg>
          </TitleLine>
          <MenuLine>
            {["File", "Edit", "View", "Insert", "Format", "Data", "Tools", "Add-ons", "Help"].map((m) => <span key={m}>{m}</span>)}
            <LastEdit>Last edit was made 5 hours ago by Timothyus Tanner</LastEdit>
          </MenuLine>
        </DocMeta>
        <DocActions>
          <MdComment size={36} />
          <ShareButton>
            <Svg width="24" height="20" viewBox="0 0 24 20">
              <circle cx="15" cy="7" r="4" fill="#8cc09b" stroke="none" /><path d="M10 19v-3q0-4 6-4t8 4v3z" fill="#8cc09b" stroke="none" />
              <circle cx="9" cy="5" r="5" fill="#fff" stroke="none" /><path d="M0 20v-3q0-5 9-5t9 5v3z" fill="#fff" stroke="none" />
            </Svg>
            Share
          </ShareButton>
          <Avatar>F</Avatar>
        </DocActions>
      </DocHeader>

      <Workspace>
        <Editor>
          <Toolbar>
            <Tool $gap={42} $w={24}><MdUndo size={28} /></Tool>
            <Tool $gap={18} $w={24}><MdRedo size={28} /></Tool>
            <Tool $gap={18} $w={24}><MdPrint size={28} /></Tool>
            <Tool $gap={20} $w={22}><MdFormatPaint size={26} /></Tool>
            <Sep $gap={16} />
            <Tool $gap={22} $w={34}>75%</Tool>
            <Caret $gap={28} />
            <Sep $gap={12} />
            <Tool $gap={21} $w={12}>$</Tool>
            <Tool $gap={28} $w={16}>%</Tool>
            <Tool $gap={20} $w={20} $drop={3}>
              <Stack>.0<DecimalArrow width="12" height="8" strokeWidth="2"><path d="M12 4H2M5 1L2 4l3 3" /></DecimalArrow></Stack>
            </Tool>
            <Tool $gap={22} $w={26} $drop={3}>
              <Stack>.00<DecimalArrow width="12" height="8" strokeWidth="2"><path d="M0 4h10M7 1l3 3-3 3" /></DecimalArrow></Stack>
            </Tool>
            <Tool $gap={14} $w={30}>123</Tool>
            <Caret $gap={3} />
            <Sep $gap={14} />
            <Tool $gap={22} $w={54}>Calibri</Tool>
            <Sep $gap={58} $faint />
            <Caret $gap={8} />
            <Sep $gap={13} />
            <Tool $gap={25} $w={20}>11</Tool>
            <Caret $gap={41} />
            <Sep $gap={12} />
            <Tool $gap={17} $w={16}><MdFormatBold size={30} /></Tool>
            <Tool $gap={27} $w={16}><MdFormatItalic size={30} /></Tool>
            <Tool $gap={22} $w={24}><MdStrikethroughS size={28} /></Tool>
            <Tool $gap={15} $w={32} $drop={2}><Stack><TextColorLetter>A</TextColorLetter><Swatch $c="#000" $up={0} /></Stack></Tool>
            <Sep $gap={13} />
            <Tool $gap={11} $w={32} $drop={4}><Stack><MdFormatColorFill size={28} /><Swatch $c="#d9d9d9" $up={5} /></Stack></Tool>
            <Tool $gap={17} $w={22}><MdBorderAll size={28} /></Tool>
            <Tool $gap={22} $w={26} $dim>
              <Svg width="25" height="22" strokeWidth="2.500"><path d="M1 6V1h8M16 1h8v5M24 16v5h-8M9 21H1v-5M0 11h9M6 7l4 4-4 4M25 11h-9M19 7l-4 4 4 4" /></Svg>
            </Tool>
            <Sep $gap={6} $faint />
            <Caret $gap={7} $dim />
            <Sep $gap={14} />
            <Tool $gap={15} $w={22}><MdFormatAlignCenter size={28} /></Tool>
            <Caret $gap={8} />
            <Tool $gap={17} $w={20}><MdVerticalAlignCenter size={30} /></Tool>
            <Caret $gap={10} />
            <Tool $gap={15} $w={24}>
              <Svg width="22" height="22" strokeWidth="2.500"><path d="M1 0v22M21 0v22M5 7h8q4 0 4 4t-4 4H8M11 11l-4 4 4 4" /></Svg>
            </Tool>
            <Caret $gap={7} />
            <Tool $gap={16} $w={24}>
              <Svg width="24" height="22" strokeWidth="2.300"><path d="M7 15L1 1l14 5M4 9l6-4M10 21L22 6M16 5h7v7" /></Svg>
            </Tool>
            <Caret $gap={7} />
            <Sep $gap={13} />
            <Tool $gap={12} $w={28}><MdInsertLink size={33} /></Tool>
            <Tool $gap={16} $w={24} $drop={2}><MdAddComment size={29} /></Tool>
            <Tool $gap={18} $w={24}>
              <Svg width="24" height="24" strokeWidth="2.500"><path d="M1.500 1.500h21v21h-21zM7.500 18V11M12 18V6M16.500 18v-4" /></Svg>
            </Tool>
            <Tool $gap={20} $w={22}>
              <Svg width="22" height="20" strokeWidth="2.500"><path d="M2 1.500h18L12.500 11v8h-3v-8zM4 4h14" /></Svg>
            </Tool>
            <Sep $gap={8} $faint />
            <Caret $gap={8} />
            <Tool $gap={18} $w={17}><MdFunctions size={30} /></Tool>
            <Caret $gap={13} $small />
            <Tool $gap={1062} $w={17}><Chev w={16} h={10} d="M1 9l7-7 7 7" sw={3} /></Tool>
          </Toolbar>

          <FormulaBar><Fx>fx</Fx>Periode</FormulaBar>

          <SheetArea>
            <SheetView>
              <HeaderRow>
                <Corner />
                {COLS.map(([n, , a], i) => <ColHead key={n} $on={i === 0} $arrow={a}>{n}</ColHead>)}
              </HeaderRow>
              <Body>
                {ROWS.map((_, i) => <RowHead key={i} $r={i + 1}>{i < 30 ? i + 2 : ""}</RowHead>)}
                {cells.map((x, i) => (
                  <Cell key={i} $c={x.c} $r={x.r} $n={x.n} $bg={x.bg} $bold={x.b} $words={/[a-z]/i.test(x.t)}>{x.t}</Cell>
                ))}
                {ROWS.slice(25).flatMap((_, r) => COLS.map((c, i) => (
                  <BlankCell key={c[0] + r} $r={r + 26} $c={i + 2} />
                )))}
                <SelectHandle />
              </Body>
            </SheetView>
            <VScroll>
              <ScrollCap />
              <ScrollArrow><Chev w={12} h={8} d="M0 7l6-6 6 6" sw={1.6} /></ScrollArrow>
              <Thumb />
              <ScrollArrow $last><Chev w={13} h={8} d="M0 1l6.500 6L13 1" sw={1.6} /></ScrollArrow>
            </VScroll>
          </SheetArea>
          <HScroll>
            <HCap $w={52} />
            <HTrack>
              <Chev w={7} h={12} d="M6 0L1 6l5 6" sw={1.6} />
              <Chev w={7} h={12} d="M1 0l5 6-5 6" sw={1.6} />
            </HTrack>
            <HCap $w={24} $end />
          </HScroll>
          <SheetTabs>
            <TabTools>
              <Svg width="16" height="16" strokeWidth="2.500"><path d="M8 0v16M0 8h16" /></Svg>
              <Svg width="19" height="18" strokeWidth="2.500"><path d="M0 2h19M0 7h19M0 12h19M0 17h19" /></Svg>
            </TabTools>
            <SheetTab $w={128} $line="#00b050" $on>Hijau<Caret $gap={0} /></SheetTab>
            <SheetTab $w={146} $line="#ffff00">Kuning<Caret $gap={0} /></SheetTab>
            <SheetTab $w={139} $line="#ff0000">Merah<Caret $gap={0} /></SheetTab>
            <Explore>
              <Svg width="28" height="32" viewBox="0 0 28 32">
                <path d="M2 0h24q2 0 2 2v23q0 2-2 2h-8l-4 5-4-5H2q-2 0-2-2V2q0-2 2-2z" fill="#0f9d58" stroke="none" />
                <path d="M14 5l2.500 6.500L23 14l-6.500 2.500L14 23l-2.500-6.500L5 14l6.500-2.500z" fill="#fff" stroke="none" />
              </Svg>
              Explore
            </Explore>
          </SheetTabs>
        </Editor>
        <SidePanel>
          <SideIcon $gap={0}>
            <Svg width="22" height="23" viewBox="0 0 22 23">
              <path d="M1 0h20v5H1z" fill="#bfc3c8" stroke="none" /><path d="M0 3h22l-1 18q0 2-2 2H3q-2 0-2-2z" fill="#3f79e8" stroke="none" />
              <text x="11" y="17.500" textAnchor="middle" fontSize="13" fontFamily="Roboto" fill="#dfe9fd" stroke="none">31</text>
            </Svg>
          </SideIcon>
          <SideIcon $gap={61}>
            <Svg width="22" height="22" viewBox="0 0 22 22">
              <path d="M2 0h18q2 0 2 2v14l-6 6H2q-2 0-2-2V2q0-2 2-2z" fill="#f5b912" stroke="none" /><path d="M22 16h-6v6z" fill="#fbe08d" stroke="none" />
              <circle cx="11" cy="8.500" r="4" stroke="#fff" strokeWidth="1.400" /><path d="M9 14h4M9.500 17h3" stroke="#fff" strokeWidth="1.600" />
            </Svg>
          </SideIcon>
          <SideIcon $gap={60}>
            <Svg width="26" height="26" viewBox="0 0 26 26">
              <circle cx="13" cy="13" r="12.500" fill="#4285f4" stroke="none" /><circle cx="6.500" cy="13.500" r="2.600" fill="#fbbc04" stroke="none" />
              <path d="M10.500 18l9-9.500" stroke="#fff" strokeWidth="4.500" strokeLinecap="round" />
            </Svg>
          </SideIcon>
          <SideIcon $gap={0} $last>
            <Chev w={8} h={14} d="M1 1l6 6-6 6" sw={2.6} />
          </SideIcon>
        </SidePanel>
      </Workspace>

      <Taskbar>
        <StartButton>
          <Svg width="32" height="32" viewBox="0 0 32 32">
            <path d="M0 4.500l13-2V15H0zM14.500 2.200L32 0v15H14.500zM0 16.500h13V29l-13-2zM14.500 16.500H32V32l-17.500-2.400z" fill="#fff" stroke="none" />
          </Svg>
        </StartButton>
        {app.map((a, i) => (
          <TaskSlot key={i} $on={i === 5} $run={i === 0 || i >= 5} $more={i === 10}>{a}</TaskSlot>
        ))}
        <Tray>
          <TrayItem $w={27} $gap={0}><Chev w={26} h={14} d="M1 13L13 1l12 12" /></TrayItem>
          <TrayItem $w={32} $gap={35}>
            <Svg width="32" height="22" viewBox="0 0 32 22"><path d="M5 20q-5-1-5-6t5-6Q8 0 16 1q6 1 7 6-8-2-11 5-6 1-7 8zM13 21q-4-1-4-4.500t4-4Q15 7 21 8q4 1 5 5 6 0 6 4t-5 4z" fill="#fff" stroke="none" /></Svg>
          </TrayItem>
          <TrayItem $w={30} $gap={34}>
            <Svg width="30" height="18" strokeWidth="2.300"><path d="M1 1h26v16H1z" /><path d="M5 5h13v8H5zM28 6h2v6h-2z" fill="#fff" stroke="none" /></Svg>
          </TrayItem>
          <TrayItem $w={33} $gap={31}>
            <Svg width="33" height="28" strokeWidth="2"><path d="M1 9h5l6-6v22l-6-6H1zM17 9q3 5 0 10M21 6q6 8 0 16" /><path d="M26 2q9 12 0 24" stroke="#6d777c" /></Svg>
          </TrayItem>
          <TrayItem $w={24} $gap={38}>
            <Svg width="24" height="26" strokeWidth="2"><path d="M1 25Q1 2 24 1M7 25Q7 8 24 7M13 25q0-11 11-12" /><circle cx="21" cy="22" r="3" fill="#fff" stroke="none" /></Svg>
          </TrayItem>
          <TrayItem $w={32} $gap={42}>
            <Svg width="32" height="32" strokeWidth="2.200"><path d="M10 28L22 4q3-4 5-1 1 2-1 5L13 25l-4 6zM10 19q-9 0-9 6t8 5M24 15q8 0 7 4t-9 5" /></Svg>
          </TrayItem>
          <TrayItem $w={46} $gap={41}>
            <Svg width="46" height="26" strokeWidth="2.300"><path d="M1 1h44v24H1z" /><path d="M6 8h34M6 13.500h34" strokeDasharray="2.500 2" /><path d="M6 19h5M14 19h18M35 19h5" /></Svg>
          </TrayItem>
          <TrayItem $w={44} $gap={31}>ENG</TrayItem>
          <Clock>9:03 PM<br />5/18/2019</Clock>
          <Notice>
            <Svg width="32" height="30" viewBox="0 0 32 30">
              <path d="M0 0h32v24H12l-6 6v-6H0z" fill="#fff" stroke="none" /><path d="M6 7h20M6 12h20M6 17h14" stroke="#1a262b" strokeWidth="2" />
            </Svg>
            <NoticeCount>19</NoticeCount>
          </Notice>
          <ShowDesktop />
        </Tray>
      </Taskbar>
    </Screen>
  );
}
